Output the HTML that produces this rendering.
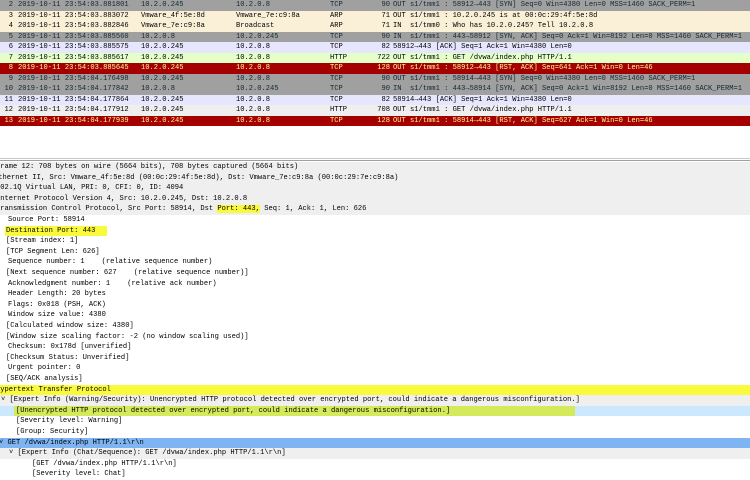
<!DOCTYPE html>
<html><head><style>
body{margin:0;width:750px;height:476px;overflow:hidden;background:#fff;font-family:"Liberation Mono",monospace;font-size:7.1px;color:#000;position:relative}
.r{position:absolute;left:0;width:750px;height:10.5px;line-height:10.5px;white-space:pre}
.r span{position:absolute;top:0}
.n{right:737px;text-align:right}
.l{right:360px;text-align:right}
.g{background:#a0a0a0;color:#12272e}
.a{background:#faf0d7}
.p{background:#e7e6ff}
.h{background:#e4ffc7}
.w{background:#efefef}
.x{background:#a40000;color:#fffc9c}
.d{position:absolute;left:0;width:750px;height:10.6px;line-height:10.6px;white-space:pre}
.gb{background:#efefef}
.hl{background:#fafa3c}
</style></head><body>
<div class="r g" style="top:0"><span class="n">2</span><span style="left:18px">2019-10-11 23:54:03.881801</span><span style="left:141px">10.2.0.245</span><span style="left:236px">10.2.0.8</span><span style="left:330px">TCP</span><span class="l">90</span><span style="left:393px">OUT s1/tmm1 : 58912→443 [SYN] Seq=0 Win=4380 Len=0 MSS=1460 SACK_PERM=1</span></div>
<div class="r a" style="top:10.5px"><span class="n">3</span><span style="left:18px">2019-10-11 23:54:03.883072</span><span style="left:141px">Vmware_4f:5e:8d</span><span style="left:236px">Vmware_7e:c9:8a</span><span style="left:330px">ARP</span><span class="l">71</span><span style="left:393px">OUT s1/tmm1 : 10.2.0.245 is at 00:0c:29:4f:5e:8d</span></div>
<div class="r a" style="top:21px"><span class="n">4</span><span style="left:18px">2019-10-11 23:54:03.882846</span><span style="left:141px">Vmware_7e:c9:8a</span><span style="left:236px">Broadcast</span><span style="left:330px">ARP</span><span class="l">71</span><span style="left:393px">IN  s1/tmm0 : Who has 10.2.0.245? Tell 10.2.0.8</span></div>
<div class="r g" style="top:31.5px"><span class="n">5</span><span style="left:18px">2019-10-11 23:54:03.885560</span><span style="left:141px">10.2.0.8</span><span style="left:236px">10.2.0.245</span><span style="left:330px">TCP</span><span class="l">90</span><span style="left:393px">IN  s1/tmm1 : 443→58912 [SYN, ACK] Seq=0 Ack=1 Win=8192 Len=0 MSS=1460 SACK_PERM=1</span></div>
<div class="r p" style="top:42px"><span class="n">6</span><span style="left:18px">2019-10-11 23:54:03.885575</span><span style="left:141px">10.2.0.245</span><span style="left:236px">10.2.0.8</span><span style="left:330px">TCP</span><span class="l">82</span><span style="left:393px">58912→443 [ACK] Seq=1 Ack=1 Win=4380 Len=0</span></div>
<div class="r h" style="top:52.5px"><span class="n">7</span><span style="left:18px">2019-10-11 23:54:03.885617</span><span style="left:141px">10.2.0.245</span><span style="left:236px">10.2.0.8</span><span style="left:330px">HTTP</span><span class="l">722</span><span style="left:393px">OUT s1/tmm1 : GET /dvwa/index.php HTTP/1.1</span></div>
<div class="r x" style="top:63px"><span class="n">8</span><span style="left:18px">2019-10-11 23:54:03.885645</span><span style="left:141px">10.2.0.245</span><span style="left:236px">10.2.0.8</span><span style="left:330px">TCP</span><span class="l">128</span><span style="left:393px">OUT s1/tmm1 : 58912→443 [RST, ACK] Seq=641 Ack=1 Win=0 Len=46</span></div>
<div class="r g" style="top:73.5px"><span class="n">9</span><span style="left:18px">2019-10-11 23:54:04.176498</span><span style="left:141px">10.2.0.245</span><span style="left:236px">10.2.0.8</span><span style="left:330px">TCP</span><span class="l">90</span><span style="left:393px">OUT s1/tmm1 : 58914→443 [SYN] Seq=0 Win=4380 Len=0 MSS=1460 SACK_PERM=1</span></div>
<div class="r g" style="top:84px"><span class="n">10</span><span style="left:18px">2019-10-11 23:54:04.177842</span><span style="left:141px">10.2.0.8</span><span style="left:236px">10.2.0.245</span><span style="left:330px">TCP</span><span class="l">90</span><span style="left:393px">IN  s1/tmm1 : 443→58914 [SYN, ACK] Seq=0 Ack=1 Win=8192 Len=0 MSS=1460 SACK_PERM=1</span></div>
<div class="r p" style="top:94.5px"><span class="n">11</span><span style="left:18px">2019-10-11 23:54:04.177864</span><span style="left:141px">10.2.0.245</span><span style="left:236px">10.2.0.8</span><span style="left:330px">TCP</span><span class="l">82</span><span style="left:393px">58914→443 [ACK] Seq=1 Ack=1 Win=4380 Len=0</span></div>
<div class="r w" style="top:105px"><span class="n">12</span><span style="left:18px">2019-10-11 23:54:04.177912</span><span style="left:141px">10.2.0.245</span><span style="left:236px">10.2.0.8</span><span style="left:330px">HTTP</span><span class="l">708</span><span style="left:393px">OUT s1/tmm1 : GET /dvwa/index.php HTTP/1.1</span></div>
<div class="r x" style="top:115.5px"><span class="n">13</span><span style="left:18px">2019-10-11 23:54:04.177939</span><span style="left:141px">10.2.0.245</span><span style="left:236px">10.2.0.8</span><span style="left:330px">TCP</span><span class="l">128</span><span style="left:393px">OUT s1/tmm1 : 58914→443 [RST, ACK] Seq=627 Ack=1 Win=0 Len=46</span></div>

<div style="position:absolute;top:158px;left:0;width:750px;height:1px;background:#c8c8c8"></div>
<div style="position:absolute;top:160px;left:0;width:750px;height:1px;background:#a0a0a0"></div>

<div class="d gb" style="top:162px"><span style="margin-left:-4px">Frame 12: 708 bytes on wire (5664 bits), 708 bytes captured (5664 bits)</span></div>
<div class="d gb" style="top:172.6px"><span style="margin-left:-6px">Ethernet II, Src: Vmware_4f:5e:8d (00:0c:29:4f:5e:8d), Dst: Vmware_7e:c9:8a (00:0c:29:7e:c9:8a)</span></div>
<div class="d gb" style="top:183.2px"><span style="margin-left:-4px">802.1Q Virtual LAN, PRI: 0, CFI: 0, ID: 4094</span></div>
<div class="d gb" style="top:193.8px"><span style="margin-left:-4px">Internet Protocol Version 4, Src: 10.2.0.245, Dst: 10.2.0.8</span></div>
<div class="d gb" style="top:204.4px"><span style="margin-left:-4px">Transmission Control Protocol, Src Port: 58914, Dst <span style="background:#fafa3c">Port: 443,</span> Seq: 1, Ack: 1, Len: 626</span></div>
<div class="d" style="top:215px;left:8px">Source Port: 58914</div>
<div class="d" style="top:225.6px;left:5px;width:101px;background:#fafa3c;padding-left:1px">Destination Port: 443</div>
<div class="d" style="top:236.2px;left:6px">[Stream index: 1]</div>
<div class="d" style="top:246.8px;left:6px">[TCP Segment Len: 626]</div>
<div class="d" style="top:257.4px;left:8px">Sequence number: 1    (relative sequence number)</div>
<div class="d" style="top:268px;left:6px">[Next sequence number: 627    (relative sequence number)]</div>
<div class="d" style="top:278.6px;left:8px">Acknowledgment number: 1    (relative ack number)</div>
<div class="d" style="top:289.2px;left:8px">Header Length: 20 bytes</div>
<div class="d" style="top:299.8px;left:8px">Flags: 0x018 (PSH, ACK)</div>
<div class="d" style="top:310.4px;left:8px">Window size value: 4380</div>
<div class="d" style="top:321px;left:6px">[Calculated window size: 4380]</div>
<div class="d" style="top:331.6px;left:6px">[Window size scaling factor: -2 (no window scaling used)]</div>
<div class="d" style="top:342.2px;left:8px">Checksum: 0x178d [unverified]</div>
<div class="d" style="top:352.8px;left:6px">[Checksum Status: Unverified]</div>
<div class="d" style="top:363.4px;left:8px">Urgent pointer: 0</div>
<div class="d" style="top:374px;left:6px">[SEQ/ACK analysis]</div>
<div class="d hl" style="top:384.6px"><span style="margin-left:-4px">Hypertext Transfer Protocol</span></div>
<div class="d gb" style="top:395.2px"><span style="margin-left:1px">˅ [Expert Info (Warning/Security): Unencrypted HTTP protocol detected over encrypted port, could indicate a dangerous misconfiguration.]</span></div>
<div class="d" style="top:405.8px;background:#cce8ff"><span style="position:absolute;left:14px;width:559px;background:#d4ea5a;padding-left:2px;height:10.6px">[Unencrypted HTTP protocol detected over encrypted port, could indicate a dangerous misconfiguration.]</span></div>
<div class="d" style="top:416.4px;left:16px">[Severity level: Warning]</div>
<div class="d" style="top:427px;left:16px">[Group: Security]</div>
<div class="d" style="top:437.6px;background:#7eb4f2"><span style="margin-left:-1px">˅ GET /dvwa/index.php HTTP/1.1\r\n</span></div>
<div class="d gb" style="top:448.2px"><span style="margin-left:9px">˅ [Expert Info (Chat/Sequence): GET /dvwa/index.php HTTP/1.1\r\n]</span></div>
<div class="d" style="top:458.8px;left:32px">[GET /dvwa/index.php HTTP/1.1\r\n]</div>
<div class="d" style="top:469.4px;left:32px">[Severity level: Chat]</div>
</body></html>
